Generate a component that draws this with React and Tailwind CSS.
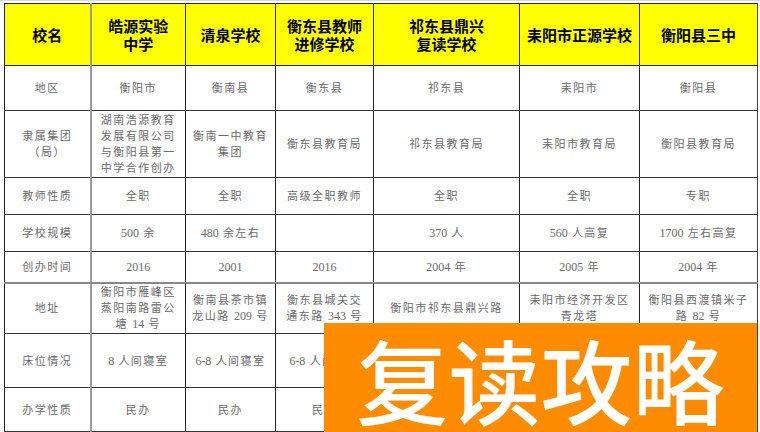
import React from "react";

const headers = [
  ["校名"],
  ["皓源实验", "中学"],
  ["清泉学校"],
  ["衡东县教师", "进修学校"],
  ["祁东县鼎兴", "复读学校"],
  ["耒阳市正源学校"],
  ["衡阳县三中"],
];

const widths = ["w-[86px]", "w-[95px]", "w-[90px]", "w-[98px]", "w-[146px]", "w-[120px]", "w-[118px]"];

const rows = [
  { h: "h-[45px]", cells: [["地区"], ["衡阳市"], ["衡南县"], ["衡东县"], ["祁东县"], ["耒阳市"], ["衡阳县"]] },
  {
    h: "h-[67px]",
    cells: [
      ["隶属集团", "（局）"],
      ["湖南浩源教育", "发展有限公司", "与衡阳县第一", "中学合作创办"],
      ["衡南一中教育", "集团"],
      ["衡东县教育局"],
      ["祁东县教育局"],
      ["耒阳市教育局"],
      ["衡阳县教育局"],
    ],
  },
  { h: "h-[37px]", cells: [["教师性质"], ["全职"], ["全职"], ["高级全职教师"], ["全职"], ["全职"], ["专职"]] },
  { h: "h-[37px]", cells: [["学校规模"], ["500 余"], ["480 余左右"], [""], ["370 人"], ["560 人高复"], ["1700 左右高复"]] },
  { h: "h-[31px]", cells: [["创办时间"], ["2016"], ["2001"], ["2016"], ["2004 年"], ["2005 年"], ["2004 年"]] },
  {
    h: "h-[51px]",
    cells: [
      ["地址"],
      ["衡阳市雁峰区", "蒸阳南路雷公", "塘 14 号"],
      ["衡南县茶市镇", "龙山路 209 号"],
      ["衡东县城关交", "通东路 343 号"],
      ["衡阳市祁东县鼎兴路"],
      ["耒阳市经济开发区", "青龙塔"],
      ["衡阳县西渡镇米子", "路 82 号"],
    ],
  },
  {
    h: "h-[54px]",
    cells: [["床位情况"], ["8 人间寝室"], ["6-8 人间寝室"], ["6-8 人间寝室"], [""], [""], [""]],
  },
  { h: "h-[44px]", cells: [["办学性质"], ["民办"], ["民办"], ["民办"], [""], [""], [""]] },
];

function cellBorder(i) {
  if (i === 0) return "border-l border-l-[#222] border-r-2 border-r-[#9a9a9a]";
  if (i === 6) return "border-l border-l-[#555] border-r border-r-[#444]";
  return "border-x border-x-[#222]";
}

function Line({ text }) {
  const parts = text.split(/([0-9][0-9\-]*)/).filter((p) => p !== "");
  return (
    <div className="whitespace-nowrap">
      {parts.map((p, k) =>
        /^[0-9]/.test(p) ? (
          <span key={k} className="tracking-normal text-[12px]">
            {p}
          </span>
        ) : (
          <span key={k}>{p}</span>
        )
      )}
    </div>
  );
}

export default function App() {
  return (
    <div className="relative w-[760px] h-[432px] overflow-hidden bg-white">
      <div className="h-[1px] bg-[#d8d8d8] w-[760px]" />
      <div className="pt-[2px] pl-[4px]">
        <table className="table-fixed border-collapse w-[753px]">
          <colgroup>
            {widths.map((w, i) => (
              <col key={i} className={w} />
            ))}
          </colgroup>
          <thead>
            <tr className="h-[62px]">
              {headers.map((lines, i) => (
                <th
                  key={i}
                  className={`bg-[#ffff00] border-y border-y-[#222] ${cellBorder(i)} p-0 text-center align-middle text-[15px] leading-[18px] font-bold text-black [font-family:'Noto_Sans_CJK_SC',sans-serif]`}
                >
                  {lines.map((l, j) => (
                    <div key={j}>{l}</div>
                  ))}
                </th>
              ))}
            </tr>
          </thead>
          <tbody>
            {rows.map((r, ri) => (
              <tr key={ri} className={r.h}>
                {r.cells.map((lines, i) => (
                  <td
                    key={i}
                    className={`${ri === 4 ? "border-b-2 border-b-[#888]" : "border-b border-b-[#333]"} border-t border-t-[#333] ${cellBorder(i)} p-0 text-center align-middle text-[11px] leading-[16px] tracking-[1.5px] text-[#6a6a6a] [font-family:'Liberation_Serif','Noto_Sans_CJK_SC',serif]`}
                  >
                    {lines.map((l, j) => (
                      <Line key={j} text={l} />
                    ))}
                  </td>
                ))}
              </tr>
            ))}
          </tbody>
        </table>
      </div>
      <div className="absolute left-[324px] top-[323px] w-[433px] h-[109px] bg-[#ff8c00] flex items-center justify-center overflow-hidden">
        <span className="text-white text-[92px] leading-[100px] font-medium [font-family:'Noto_Sans_CJK_SC',sans-serif]">
          复读攻略
        </span>
      </div>
    </div>
  );
}
